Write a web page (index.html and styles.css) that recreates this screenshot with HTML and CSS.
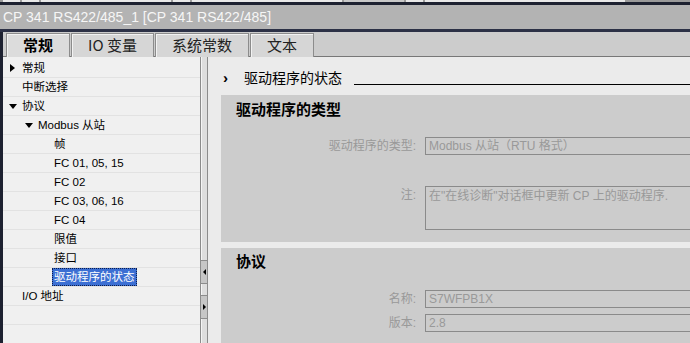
FILE: index.html
```html
<!DOCTYPE html>
<html lang="zh-CN">
<head>
    <meta charset="UTF-8">
    <title>CP 341 RS422/485_1</title>
    <link rel="stylesheet" href="styles.css">
</head>
<body>

    <div class="topstrip">
        <span class="tbox w17"></span>
        <span class="tbox w17"></span>
        <span class="tbox w130"></span>
        <span class="tbox w17"></span>
        <span class="tbox w150"></span>
        <span class="tbox w60 dim"></span>
        <span class="tbox w17"></span>
        <span class="tbox w200"></span>
    </div>

    <div class="titlebar">CP 341 RS422/485_1 [CP 341 RS422/485]</div>

    <div class="editor">
        <div class="tabs">
            <div class="tab active">常规</div>
            <div class="tab">IO 变量</div>
            <div class="tab">系统常数</div>
            <div class="tab">文本</div>
        </div>

        <div class="body">
            <ul class="tree">
                <li class="row l0"><span class="tw"><i class="arr-right"></i></span>常规</li>
                <li class="row l0"><span class="tw"></span>中断选择</li>
                <li class="row l0"><span class="tw"><i class="arr-down"></i></span>协议</li>
                <li class="row l1"><span class="tw"><i class="arr-down"></i></span>Modbus 从站</li>
                <li class="row l2"><span class="tw"></span>帧</li>
                <li class="row l2"><span class="tw"></span>FC 01, 05, 15</li>
                <li class="row l2"><span class="tw"></span>FC 02</li>
                <li class="row l2"><span class="tw"></span>FC 03, 06, 16</li>
                <li class="row l2"><span class="tw"></span>FC 04</li>
                <li class="row l2"><span class="tw"></span>限值</li>
                <li class="row l2"><span class="tw"></span>接口</li>
                <li class="row l2"><span class="tw"></span><span class="sel">驱动程序的状态</span></li>
                <li class="row l0"><span class="tw"></span>I/O 地址</li>
                <li class="row"></li>
                <li class="row"></li>
            </ul>

            <div class="splitter">
                <span class="sbtn"><i class="tri-left"></i></span>
                <span class="sbtn"><i class="tri-right"></i></span>
            </div>

            <div class="content">
                <div class="section-head">
                    <span class="chev">›</span>
                    <span class="section-title">驱动程序的状态</span>
                    <span class="section-line"></span>
                </div>

                <div class="panel first">
                    <h2>驱动程序的类型</h2>
                    <div class="form">
                        <label>驱动程序的类型:</label>
                        <div class="field">Modbus 从站（RTU 格式）</div>
                        <label class="gap">注:</label>
                        <div class="field area gap">在"在线诊断"对话框中更新 CP 上的驱动程序.</div>
                    </div>
                </div>

                <div class="panel second">
                    <h2>协议</h2>
                    <div class="form">
                        <label>名称:</label>
                        <div class="field">S7WFPB1X</div>
                        <label>版本:</label>
                        <div class="field">2.8</div>
                    </div>
                </div>
            </div>
        </div>
    </div>

</body>
</html>
```

FILE: styles.css
```css
* {
    box-sizing: border-box;
}

body {
    margin: 0;
    width: 690px;
    height: 343px;
    overflow: hidden;
    background-color: #ebebeb;
    font-family: "Liberation Sans", "Noto Sans CJK SC", sans-serif;
    color: #000;
}

/* toolbar remnant at the very top */
.topstrip {
    height: 2px;
    display: flex;
    gap: 2px;
    padding-left: 3px;
    background-color: #9a9a9a;
    overflow: hidden;
}

.tbox {
    height: 2px;
    background-color: #e8e8e8;
}

.tbox.dim { background-color: #c8c8c8; }
.w17 { width: 17px; }
.w60 { width: 60px; }
.w130 { width: 130px; }
.w150 { width: 150px; }
.w200 { width: 200px; }

.titlebar {
    height: 30px;
    border-top: 3px solid #1d2130;
    border-bottom: 3px solid #2c3146;
    background-color: #b3b3b3;
    color: #f6f6f6;
    font-size: 14px;
    line-height: 24px;
    padding-left: 3px;
    white-space: nowrap;
}

.editor {
    border-left: 3px solid #1d2130;
    height: 311px;
    display: flex;
    flex-direction: column;
}

/* tabs */
.tabs {
    height: 25px;
    flex: none;
    display: flex;
    align-items: flex-end;
    gap: 1px;
    padding-left: 3px;
    background-color: #cccccc;
    border-bottom: 1px solid #777;
}

.tab {
    height: 24px;
    margin-bottom: -1px;
    padding: 0 16px;
    border: 1px solid #8c8c8c;
    border-bottom: none;
    box-shadow: inset 1px 1px 0 #f2f2f2;
    background-color: #d6d6d6;
    font-family: "Noto Sans CJK SC", sans-serif;
    font-size: 15px;
    line-height: 22px;
    color: #222;
}

.tab.active {
    background-color: #dcdcdc;
    font-weight: bold;
    color: #000;
}

.body {
    flex: 1;
    display: flex;
    min-height: 0;
}

/* tree */
.tree {
    list-style: none;
    margin: 0;
    padding: 2px 0 0 0;
    width: 198px;
    flex: none;
    background-color: #f0f0f0;
    border-right: 1px solid #8c8c8c;
    overflow: hidden;
}

.row {
    height: 19px;
    border-bottom: 1px solid #e2e2e2;
    font-size: 11.5px;
    line-height: 18px;
    white-space: nowrap;
    display: flex;
    align-items: center;
}

.l0 { padding-left: 3px; }
.l1 { padding-left: 19px; }
.l2 { padding-left: 35px; }

.tw {
    width: 13px;
    margin-right: 3px;
    height: 18px;
    display: flex;
    align-items: center;
    justify-content: center;
    flex: none;
}

.arr-right {
    width: 0;
    height: 0;
    border-left: 5px solid #000;
    border-top: 4px solid transparent;
    border-bottom: 4px solid transparent;
}

.arr-down {
    width: 0;
    height: 0;
    margin-top: 1px;
    border-top: 5px solid #000;
    border-left: 4px solid transparent;
    border-right: 4px solid transparent;
}

.sel {
    margin-left: -2px;
    padding: 0 1px;
    height: 18px;
    line-height: 16px;
    background-color: #3c6fd3;
    color: #fff;
    border: 1px dotted #0c1d4a;
}

/* splitter between tree and editor */
.splitter {
    width: 7px;
    flex: none;
    background-color: #dedede;
    border-right: 1px solid #8c8c8c;
    box-shadow: inset 1px 0 0 #f5f5f5;
    display: flex;
    flex-direction: column;
    gap: 11px;
    padding-top: 203px;
}

.sbtn {
    height: 24px;
    background-color: #c6c6c6;
    border-top: 1px solid #8c8c8c;
    border-bottom: 1px solid #8c8c8c;
    display: flex;
    align-items: center;
    justify-content: center;
}

.tri-left {
    width: 0;
    height: 0;
    border-right: 3px solid #000;
    border-top: 3px solid transparent;
    border-bottom: 3px solid transparent;
}

.tri-right {
    width: 0;
    height: 0;
    border-left: 3px solid #000;
    border-top: 3px solid transparent;
    border-bottom: 3px solid transparent;
}

/* right side */
.content {
    flex: 1;
    background-color: #ebebeb;
    padding-left: 13px;
    overflow: hidden;
}

.section-head {
    display: flex;
    align-items: flex-end;
    padding-top: 11px;
    height: 30px;
}

.chev {
    width: 23px;
    padding-left: 2px;
    font-size: 15px;
    font-weight: bold;
    line-height: 18px;
}

.section-title {
    font-family: "Noto Sans CJK SC", sans-serif;
    font-size: 14px;
    line-height: 19px;
}

.section-line {
    flex: 1;
    margin-left: 12px;
    margin-bottom: 2px;
    border-bottom: 1px solid #000;
}

.panel {
    background-color: #cccccc;
    margin-right: -40px;
    overflow: hidden;
}

.panel.first {
    margin-top: 8px;
    height: 147px;
    padding-top: 4px;
}

.panel.second {
    margin-top: 6px;
    height: 100px;
    padding-top: 3px;
}

.panel h2 {
    margin: 0 0 0 15px;
    font-family: "Noto Sans CJK SC", sans-serif;
    font-size: 15px;
    line-height: 20px;
    font-weight: bold;
}

.form {
    display: grid;
    grid-template-columns: 195px 1fr;
    column-gap: 9px;
    row-gap: 6px;
    font-size: 12px;
    color: #999;
}

.panel.first .form {
    margin-top: 18px;
}

.panel.second .form {
    margin-top: 19px;
}

.form label {
    text-align: right;
    line-height: 18px;
    white-space: nowrap;
}

.form .gap {
    margin-top: 25px;
}

.field {
    height: 18px;
    border: 1px solid #8a8a8a;
    padding-left: 3px;
    line-height: 16px;
    white-space: nowrap;
}

.field.area {
    height: 44px;
    padding-top: 1px;
}
```
